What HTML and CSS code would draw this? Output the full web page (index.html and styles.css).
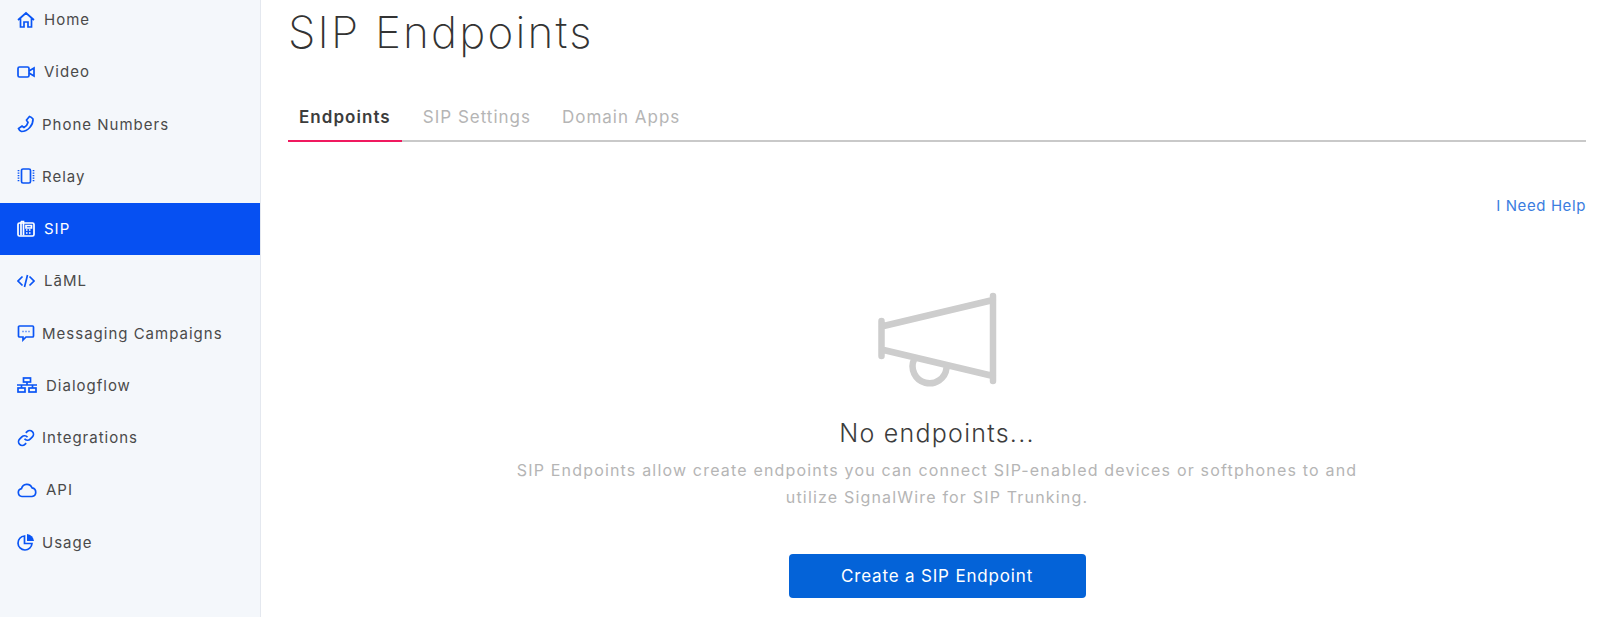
FILE: index.html
```html
<!DOCTYPE html>
<html lang="en">
<head>
<meta charset="utf-8">
<title>SIP Endpoints</title>
<link rel="stylesheet" href="styles.css">
</head>
<body>
<div class="app">
  <aside class="sidebar">
    <nav class="nav">
      <a class="nav-item"><svg class="ico" viewBox="0 0 18 18"><path d="M1 9 9 2l8 7M3.500 7.500V16h3.500v-5h4v5h3.500V7.500"/></svg><span>Home</span></a>
      <a class="nav-item"><svg class="ico" viewBox="0 0 18 18"><rect x="1" y="4" width="11" height="10" rx="1.500"/><path d="m12 8 5-3v8l-5-3"/></svg><span>Video</span></a>
      <a class="nav-item"><svg class="ico tight" viewBox="0 0 18 18"><path d="M12.500 1.500c1 .3 2.500 1.300 3.500 2.500.3 6-5 12.500-11.500 12.500-1.500-.5-2.500-1.500-3-3l3.500-2.500 2 1.500c2-1 3.500-3 4-5L9.500 5z"/></svg><span>Phone Numbers</span></a>
      <a class="nav-item"><svg class="ico tight" viewBox="0 0 18 18"><rect x="4.500" y="2" width="9" height="14" rx="1.500"/><path class="dots" d="M1.500 3v12M16.500 3v12"/></svg><span>Relay</span></a>
      <a class="nav-item active"><svg class="ico" viewBox="0 0 18 18"><rect x="1" y="3" width="16" height="13" rx="1.500"/><path d="M4 1.500h2.500v14M4 1.500v14M9 5.500h5.500v2.500H9zM9 10h1.500M12 10h1.500M9 13h1.500M12 13h1.500"/></svg><span>SIP</span></a>
      <a class="nav-item"><svg class="ico" viewBox="0 0 18 18"><path d="M5.500 4.500 1 9l4.500 4.500M12.500 4.500 17 9l-4.500 4.500M10.500 3l-3 12"/></svg><span>LāML</span></a>
      <a class="nav-item"><svg class="ico tight" viewBox="0 0 18 18"><path d="M2.500 2h13a1 1 0 0 1 1 1v9a1 1 0 0 1-1 1H9l-3 3v-3H2.500a1 1 0 0 1-1-1V3a1 1 0 0 1 1-1z"/><path d="M5.500 7.500h1M8.500 7.500h1M11.500 7.500h1"/></svg><span>Messaging Campaigns</span></a>
      <a class="nav-item"><svg class="ico wide" viewBox="0 0 20 18"><rect x="6.500" y="2" width="7" height="4"/><rect x="1" y="12" width="7" height="4"/><rect x="12" y="12" width="7" height="4"/><path d="M10 6v3M0 9h20M4.500 9v3M15.500 9v3"/></svg><span>Dialogflow</span></a>
      <a class="nav-item"><svg class="ico tight link" viewBox="0 0 24 24"><path d="M10 13a5 5 0 0 0 7.540.540l3-3a5 5 0 0 0-7.070-7.070l-1.720 1.710"/><path d="M14 11a5 5 0 0 0-7.540-.540l-3 3a5 5 0 0 0 7.070 7.070l1.710-1.710"/></svg><span>Integrations</span></a>
      <a class="nav-item"><svg class="ico wide" viewBox="0 0 20 18"><path d="M5 15.500a4 4 0 0 1-.5-7.900A5.500 5.500 0 0 1 15 6.800a4.400 4.400 0 0 1 0 8.700z"/></svg><span>API</span></a>
      <a class="nav-item"><svg class="ico tight" viewBox="0 0 18 18"><path d="M7.500 3a7 7 0 1 0 7.500 7.500H7.500z"/><path class="solid" d="M10 1a7.500 7.500 0 0 1 7 7h-7z"/></svg><span>Usage</span></a>
    </nav>
  </aside>
  <main class="main">
    <h1 class="title">SIP Endpoints</h1>
    <div class="tabs">
      <a class="tab current">Endpoints</a>
      <a class="tab">SIP Settings</a>
      <a class="tab">Domain Apps</a>
    </div>
    <div class="help-row"><a class="help">I Need Help</a></div>
    <section class="empty">
      <svg class="horn" viewBox="0 0 120 98"><path d="M4.500 31v35M116 6v85M4.500 36.500 116 10M4.500 59.500 116 86M37 69.500A17 17 0 1 0 69.500 78"/></svg>
      <h2 class="empty-title">No endpoints...</h2>
      <p class="empty-text">SIP Endpoints allow create endpoints you can connect SIP-enabled devices or softphones to and<br>utilize SignalWire for SIP Trunking.</p>
      <a class="cta">Create a SIP Endpoint</a>
    </section>
  </main>
</div>
</body>
</html>
```
FILE: styles.css
```css
* { box-sizing: border-box; }
html, body { margin: 0; height: 623px; overflow: hidden; background: #fff; }
body { font-family: Inter, "Liberation Sans", sans-serif; color: #3c3c3c; }
.app { display: flex; height: 623px; align-items: flex-start; }
.sidebar { flex: 0 0 261px; height: 617px; background: #f4f7fb; border-right: 1px solid #e4e8ef; }
.nav { display: flex; flex-direction: column; margin-top: -6.5px; }
.nav-item { height: 52.25px; display: flex; align-items: center; padding-left: 17px; font-size: 15px; font-weight: 400; color: #4a4a4a; letter-spacing: 1px; }
.nav-item.active { background: #0650f2; color: #fff; }
.ico { width: 18px; height: 18px; flex: none; margin-right: 9px; fill: none; stroke: #0a55f5; stroke-width: 1.700; }
.ico.tight { margin-right: 7px; }
.ico.wide { width: 20px; }
.ico.link { stroke-width: 2.300; }
.ico .dots { stroke-dasharray: 1.200 1.300; }
.ico .solid { fill: #0a55f5; stroke: none; }
.active .ico { stroke: #fff; }
.main { flex: 1; min-width: 0; padding: 0 14px 0 27px; }
.title { margin: 4px 0 0; font-size: 44px; line-height: 56px; font-weight: 200; color: #333; letter-spacing: 2.2px; }
.tabs { display: flex; margin-top: 28px; height: 54px; border-bottom: 2px solid #c9c9c9; }
.tab { height: 54px; padding: 0 11px; line-height: 59px; font-size: 17px; color: #b5b5b5; margin-right: 9px; letter-spacing: 1px; }
.tab.current { font-weight: 600; color: #3c3c3c; letter-spacing: 1.05px; margin-right: 10px; border-bottom: 2px solid #f0195f; }
.help-row { display: flex; justify-content: flex-end; margin-top: 54px; }
.help { font-size: 15px; line-height: 20px; color: #3b7de0; letter-spacing: .6px; }
.empty { display: flex; flex-direction: column; align-items: center; margin-top: 74px; }
.horn { width: 120px; height: 98px; fill: none; stroke: #cdcdcd; stroke-width: 6.500; stroke-linecap: round; }
.empty-title { margin: 28px 0 0; font-size: 25px; line-height: 34px; font-weight: 300; color: #3c3c3c; letter-spacing: 1.25px; }
.empty-text { margin: 7px 0 0; text-align: center; font-size: 16px; line-height: 26.5px; color: #b5b5b5; letter-spacing: 1.18px; }
.cta { margin-top: 44px; width: 297px; height: 44px; display: flex; align-items: center; justify-content: center; background: #0463d8; border-radius: 4px; color: #fff; font-size: 17px; letter-spacing: .83px; }
```
